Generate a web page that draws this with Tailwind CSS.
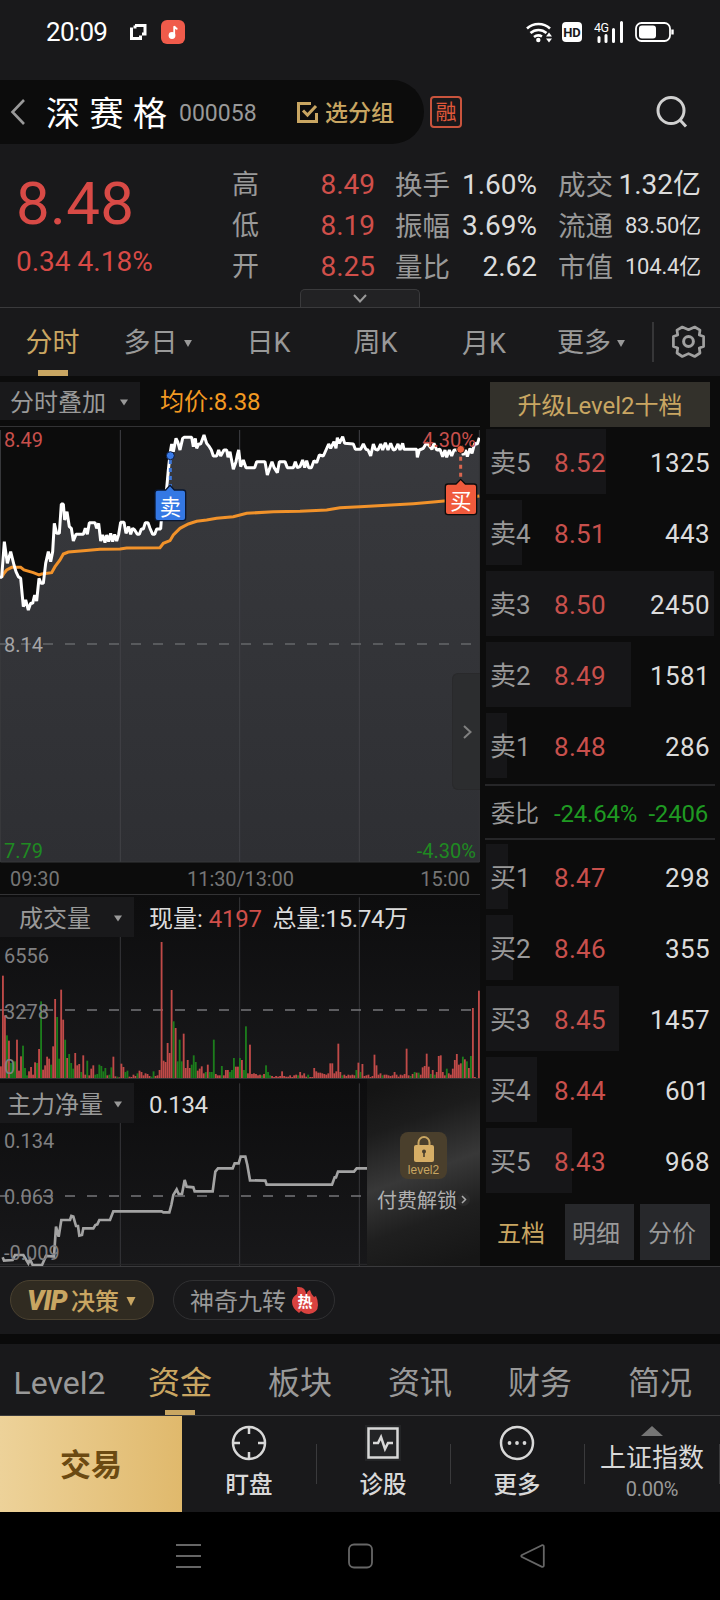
<!DOCTYPE html>
<html lang="zh-CN">
<head>
  <meta charset="UTF-8" />
  <meta name="viewport" content="width=device-width, initial-scale=1.0" />
  <title>深赛格 000058</title>
  <script src="https://cdn.jsdelivr.net/npm/@tailwindcss/browser@4"></script>
</head>
<body class="bg-black">
<div class="w-[720px] h-[1600px] overflow-hidden flex flex-col bg-[#19191b] text-[#999999] leading-none whitespace-nowrap font-['Roboto','Noto_Sans_CJK_SC',sans-serif]">

  <!-- status bar -->
  <div class="h-[80px] shrink-0 flex items-start pt-5 pl-[46px] pr-[46px] text-white">
    <div class="flex items-center h-6 w-full">
      <span class="text-[26px] tracking-[-0.7px] w-[83px]">20:09</span>
      <svg class="w-[18px] h-[18px] mr-[14px]" viewBox="0 0 18 18"><path d="M6 2.500h10v8.500h-3M2.500 4.500v11h9v-3M6 2.500v3" fill="none" stroke="#fff" stroke-width="3"/></svg>
      <svg class="w-6 h-6" viewBox="0 0 24 24"><rect width="24" height="24" rx="6" fill="#f05b4b"/><circle cx="11" cy="15.500" r="3.400" fill="#fff"/><path d="M13.200 15V6.200q1 2.300 3.200 2.800" fill="none" stroke="#fff" stroke-width="1.800"/></svg>
      <div class="grow"></div>
      <svg class="w-[27px] h-[22px] mr-[9px]" viewBox="0 0 27 22"><g fill="none" stroke="#fff" stroke-width="2.600"><path d="M1 7.500a17 17 0 0 1 23 0"/><path d="M4.500 12a12 12 0 0 1 16 0"/><path d="M8 16a7 7 0 0 1 8-.5"/></g><circle cx="12.300" cy="19" r="2.200" fill="#fff"/><path d="M23 11.500l3 4h-6zM23 21.500l3-4h-6z" fill="#fff"/></svg>
      <span class="w-5 h-5 mr-3 rounded-[4px] bg-white text-[#19191b] text-[13px] font-bold flex items-center justify-center">HD</span>
      <svg class="w-[30px] h-[22px] mr-[11px]" viewBox="0 0 30 22"><text x="0" y="10.500" font-size="12.500" textLength="15" fill="#fff">4G</text><path d="M5 16.500v4M12 14.500v6M19.500 8.500v12M27.500 1.500v19" stroke="#fff" stroke-width="3" stroke-linecap="round"/></svg>
      <svg class="w-[39px] h-[22px]" viewBox="0 0 39 22"><rect x="1" y="2" width="34" height="18" rx="5.500" fill="none" stroke="#fff" stroke-width="1.800"/><rect x="4" y="4.500" width="17" height="13" rx="3" fill="#fff"/><path d="M37.500 8.500v5" stroke="#fff" stroke-width="2.400"/></svg>
    </div>
  </div>

  <!-- title -->
  <div class="h-16 shrink-0 flex items-center">
    <div class="w-[424px] h-16 rounded-r-full bg-[#0c0c0c] flex items-center pl-[10px]">
      <svg class="w-4 h-7 mr-5" viewBox="0 0 16 28"><path d="M14 2L2.500 14 14 26" fill="none" stroke="#999" stroke-width="2.600"/></svg>
      <span class="text-[34px] tracking-[9.500px] text-white w-[133px] pt-[3px]">深赛格</span>
      <span class="text-[23px] w-[118px] pt-[2px]">000058</span>
      <svg class="w-[21px] h-[21px] mr-[7px]" viewBox="0 0 21 21"><path d="M14 1.500H1.500v18h18V11M6 8.500l4.500 4.500L19 4" fill="none" stroke="#c9a662" stroke-width="3"/></svg>
      <span class="text-[23px] font-medium text-[#c9a662] pt-[2px]">选分组</span>
    </div>
    <span class="w-8 h-8 ml-[6px] border-2 border-[#c9543d] rounded-[4px] text-[21px] text-[#e0583a] flex items-center justify-center pt-px">融</span>
    <svg class="w-[34px] h-[34px] ml-auto mr-[31px]" viewBox="0 0 34 34"><circle cx="16" cy="15.500" r="13" fill="none" stroke="#d0d0d0" stroke-width="3"/><path d="M25 25l6 6.500" stroke="#d0d0d0" stroke-width="3"/></svg>
  </div>

  <!-- quote -->
  <div class="relative h-[164px] shrink-0 border-b border-[#3a3a3c] flex text-[28px]">
    <div class="w-[232px] pl-4 text-[#d84a46]">
      <div class="text-[60px] mt-[30px] tracking-[0.300px]">8.48</div>
      <div class="mt-[14px]">0.34 4.18%</div>
    </div>
    <div class="grid grid-rows-[41px_41px_41px] items-center w-[143px] mt-[20px] h-[123px]">
      <div class="flex justify-between items-center"><span class="text-[27px] pt-[2px]">高</span><span class="text-[#d04f4a]">8.49</span></div>
      <div class="flex justify-between items-center"><span class="text-[27px] pt-[2px]">低</span><span class="text-[#d04f4a]">8.19</span></div>
      <div class="flex justify-between items-center"><span class="text-[27px] pt-[2px]">开</span><span class="text-[#d04f4a]">8.25</span></div>
    </div>
    <div class="grid grid-rows-[41px_41px_41px] items-center w-[142px] ml-5 mt-[20px] h-[123px]">
      <div class="flex justify-between items-center"><span class="text-[27.500px] pt-[2px]">换手</span><span class="text-[#dcdcdc]">1.60%</span></div>
      <div class="flex justify-between items-center"><span class="text-[27.500px] pt-[2px]">振幅</span><span class="text-[#dcdcdc]">3.69%</span></div>
      <div class="flex justify-between items-center"><span class="text-[27.500px] pt-[2px]">量比</span><span class="text-[#dcdcdc]">2.62</span></div>
    </div>
    <div class="grid grid-rows-[41px_41px_41px] items-center w-[143px] ml-[21px] mt-[20px] h-[123px]">
      <div class="flex justify-between items-center"><span class="text-[27.500px] pt-[2px]">成交</span><span class="text-[#dcdcdc] text-[28px] pt-px">1.32亿</span></div>
      <div class="flex justify-between items-center"><span class="text-[27.500px] pt-[2px]">流通</span><span class="text-[#dcdcdc] text-[22px] tracking-[-0.200px] pt-px">83.50亿</span></div>
      <div class="flex justify-between items-center"><span class="text-[27.500px] pt-[2px]">市值</span><span class="text-[#dcdcdc] text-[22px] tracking-[-0.200px] pt-px">104.4亿</span></div>
    </div>
    <div class="absolute left-[300px] bottom-0 w-[120px] h-[18px] border border-b-0 border-[#3a3a3c] rounded-t-[5px] bg-[#222224] flex items-center justify-center">
      <svg class="w-[14px] h-[9px]" viewBox="0 0 14 9"><path d="M1 1l6 6.500L13 1" fill="none" stroke="#999" stroke-width="2"/></svg>
    </div>
  </div>

  <!-- period tabs -->
  <div class="h-[68px] shrink-0 flex items-center text-[27px]">
    <div class="relative w-[105px] h-full flex items-center justify-center pt-[3px] text-[#c9a662]">分时<i class="absolute bottom-0 left-[38px] w-[30px] h-[6px] bg-[#c9a662]"></i></div>
    <div class="w-[105px] flex items-center justify-center gap-[6px] pt-[3px]">多日<svg class="w-2 h-[7px]" viewBox="0 0 9 8"><path d="M0 0h9L4.500 8z" fill="#999"/></svg></div>
    <div class="w-[117px] text-center pt-[3px]">日K</div>
    <div class="w-[97px] text-center pt-[3px]">周K</div>
    <div class="w-[120px] text-center pt-[5px]">月K</div>
    <div class="w-[94px] flex items-center justify-center gap-[6px] pt-[3px]">更多<svg class="w-2 h-[7px]" viewBox="0 0 9 8"><path d="M0 0h9L4.500 8z" fill="#999"/></svg></div>
    <i class="w-[2px] h-10 ml-[14px] bg-[#363638]"></i>
    <svg class="w-[34px] h-[34px] ml-[17px]" viewBox="0 0 34 34"><g fill="none" stroke="#a0a0a0" stroke-width="2.700" stroke-linejoin="round"><path d="M11.300 2L17.500 4.700 23.700 2 29 5.200 28.300 10 32.600 11.500V21.500L28.300 23 29 28 23.700 31.500 17.500 28.600 11.300 31.500 6 28 6.700 23 2.400 21.500V11.500L6.700 10 6 5.200z"/><circle cx="17.500" cy="16.500" r="4.900" stroke-width="3"/></g></svg>
  </div>

  <!-- charts and order book -->
  <div class="h-[891px] shrink-0 bg-[#0c0c0c] border-b border-[#3a3a3c] flex">
    <div class="w-[480px] flex flex-col">
      <div class="h-[51px] pt-[6px] flex border-b border-[#333335]">
        <div class="w-[140px] h-[38px] bg-[#19191b] text-[24px] flex items-center pt-[3px] pl-[10px] gap-[14px]">分时叠加<svg class="w-2 h-[7px]" viewBox="0 0 9 7"><path d="M0 0h9L4.500 7z" fill="#999"/></svg></div>
        <div class="h-[38px] flex items-center pl-5 pt-[2px] text-[24px] text-[#f39a22]">均价:8.38</div>
      </div>

      <!-- price -->
      <div class="relative h-[436px]">
        <svg class="block w-[480px] h-[436px]" viewBox="0 171 1440 1308">
          <defs><linearGradient id="area" x1="0" y1="0" x2="0" y2="1"><stop offset="0" stop-color="#38393d"/><stop offset="1" stop-color="#2e2f33"/></linearGradient></defs>
          <path id="priceArea" fill="url(#area)"/>
          <path d="M361 180V1476M719 180V1476M1078 180V1476" stroke="#414246" stroke-width="3"/>
          <path d="M1.500 180V1476H1438V180" fill="none" stroke="#37383b" stroke-width="3"/>
          <path d="M-3 822H1416" stroke="#66676a" stroke-width="5" stroke-dasharray="30 36"/>
          <path d="M5 622L12 610 20 600 35 592 62 592 72 600 100 608 117 615 125 612 155 608 165 590 180 570 190 552 205 546 250 542 300 538 360 537 380 534 480 533 490 520 510 512 520 495 540 475 565 462 590 454 620 450 650 445 700 440 740 430 820 425 900 424 980 420 1020 413 1080 410 1160 406 1240 401 1300 396 1340 392 1438 378" fill="none" stroke="#f1922a" stroke-width="9"/>
          <path id="priceLine" fill="none" stroke="#fff" stroke-width="9" stroke-linejoin="bevel"/>
          <path d="M511 270V350" stroke="#3f78d8" stroke-width="9" stroke-dasharray="12 12"/>
          <circle cx="511" cy="257" r="12" fill="#3a7be8" stroke="#0c1c40" stroke-width="3"/>
          <path d="M1382 260V330" stroke="#d9664f" stroke-width="9" stroke-dasharray="12 12"/>
          <circle cx="1382" cy="238" r="12" fill="#f0603f" stroke="#141414" stroke-width="3"/>
          <path d="M473 360H497L510 346 523 360H549Q557 360 557 368V444Q557 452 549 452H473Q465 452 465 444V368Q465 360 473 360Z" fill="#3478e4" stroke="#0a1730" stroke-width="4"/>
          <path d="M1344 342H1368L1382 328 1396 342H1422Q1430 342 1430 350V426Q1430 434 1422 434H1344Q1336 434 1336 426V350Q1336 342 1344 342Z" fill="#f05a3c" stroke="#0c0c0c" stroke-width="4"/>
          <text x="511" y="434" font-size="64" fill="#fff" text-anchor="middle">卖</text>
          <text x="1383" y="416" font-size="64" fill="#fff" text-anchor="middle">买</text>
        </svg>
        <div class="absolute inset-0 flex flex-col justify-between pt-[3px] pb-[2px] px-1 text-[20px]">
          <div class="flex justify-between text-[#c8504c]"><span>8.49</span><span>4.30%</span></div>
          <div class="text-[#a5a5a7] pb-px">8.14</div>
          <div class="flex justify-between text-[#1f8a22]"><span>7.79</span><span>-4.30%</span></div>
        </div>
        <div class="absolute right-0 top-[246px] w-7 h-[117px] rounded-l-[6px] border border-r-0 border-[#29292b] bg-[#2c2d2f] flex items-center justify-center pl-px">
          <svg class="w-[9px] h-[14px]" viewBox="0 0 9 14"><path d="M1 1l6.500 6L1 13" fill="none" stroke="#808080" stroke-width="2"/></svg>
        </div>
      </div>
      <div class="h-8 flex justify-between items-center px-[10px] pt-px text-[20px] text-[#757575] border-b border-[#333335]"><span>09:30</span><span class="tracking-[-0.100px] pl-px">11:30/13:00</span><span>15:00</span></div>

      <!-- volume -->
      <div class="relative h-[184px] bg-linear-to-b from-[#0d0d0e] to-[#18181a] border-b border-[#333335]">
        <svg class="absolute left-0 top-0 w-[480px] h-[183px]" viewBox="0 15 1440 549">
          <path d="M361 141V563M719 22V563M1078 22V563" stroke="#37373a" stroke-width="3"/>
          <path d="M-3 360H1416" stroke="#76767a" stroke-width="5" stroke-dasharray="30 36"/>
          <g id="volume"></g>
        </svg>
        <div class="relative flex items-center h-10 mt-[2px] text-[24px]">
          <div class="w-[134px] h-10 bg-[#19191b] flex items-center pt-[3px] pl-[19px] gap-[23px]">成交量<svg class="w-2 h-[7px]" viewBox="0 0 9 7"><path d="M0 0h9L4.500 7z" fill="#999"/></svg></div>
          <span class="pl-[15px] pt-[3px] text-[#dcdcdc]">现量:</span><span class="pl-[6px] pt-[3px] tracking-[-0.300px] text-[#d04f4a]">4197</span><span class="pl-[11px] pt-[3px] tracking-[-0.300px] text-[#dcdcdc]">总量:15.74万</span>
        </div>
        <div class="relative pl-1 text-[20px] text-[#808082] flex flex-col gap-[35.500px] pt-[9px]"><span>6556</span><span>3278</span><span>0</span></div>
      </div>

      <!-- net inflow -->
      <div class="relative h-[187px] bg-linear-to-b from-[#0d0d0e] to-[#18181a]">
        <svg class="absolute left-0 top-0 w-[480px] h-[187px]" viewBox="0 27 1440 561">
          <path d="M361 159V588M719 40V588M1078 40V588" stroke="#37373a" stroke-width="3"/>
          <path d="M0 583H1101" stroke="#2a2a2c" stroke-width="3"/>
          <path d="M-3 378H1085" stroke="#76767a" stroke-width="5" stroke-dasharray="30 36"/>
          <path d="M8 562L12 572 38 570 45 555 70 555 85 580 90 568 98 585 126 585 138 558 162 560 168 470 176 500 184 450 210 450 214 438 220 440 228 468 234 468 238 497 246 495 250 475 280 475 286 465 292 463 298 450 330 450 340 424 485 424 490 427 508 427 514 405 520 375 530 358 536 372 546 372 554 330 560 350 580 352 584 364 638 364 646 305 654 295 698 295 704 280 716 280 722 260 736 260 742 285 750 331 796 332 800 344 996 344 1004 322 1008 322 1014 305 1062 305 1070 295 1101 295" fill="none" stroke="#a3a3a3" stroke-width="8"/>
        </svg>
        <div class="relative flex items-center h-10 top-1 text-[24px]">
          <div class="w-[134px] h-10 bg-[#19191b] flex items-center pt-[3px] pl-[7px] gap-[11px]">主力净量<svg class="w-2 h-[7px]" viewBox="0 0 9 7"><path d="M0 0h9L4.500 7z" fill="#999"/></svg></div>
          <span class="pl-[15px] pt-[4px] tracking-[-0.300px] text-[#dcdcdc]">0.134</span>
        </div>
        <div class="relative pl-1 text-[20px] text-[#808082] flex flex-col gap-9 pt-3"><span>0.134</span><span>0.063</span><span>-0.009</span></div>
        <div class="absolute left-[367px] top-0 w-[113px] h-[187px] bg-[linear-gradient(160deg,#141414_5%,#1c1c1c_25%,#383838_50%,#1f1f1f_72%,#161616_95%)] flex flex-col items-center pt-[53px]">
          <div class="w-[47px] h-[47px] rounded-[8px] bg-[#4a3f2c] flex flex-col items-center pt-1 text-[#c9a662]">
            <svg class="w-5 h-[26px]" viewBox="0 0 20 26"><path d="M4.500 10V6.500a5.500 5.500 0 0 1 11 0V10" fill="none" stroke="#c9a662" stroke-width="2"/><rect y="9" width="20" height="17" rx="2" fill="#d6ae66"/><circle cx="10" cy="15.500" r="2" fill="#4a3f2c"/><path d="M10 16v5" stroke="#4a3f2c" stroke-width="1.600"/></svg>
            <span class="text-[12px] mt-[2px] font-['Liberation_Sans']">level2</span>
          </div>
          <div class="flex items-center mt-[12px] text-[20px] text-[#b0b0b0]">付费解锁<svg class="w-[13px] h-[13px] -mt-[3px]" viewBox="0 0 13 13"><circle cx="6.500" cy="6.500" r="6.500" fill="#2b2b2b"/><path d="M5 3l3.500 3.500L5 10" fill="none" stroke="#aaa" stroke-width="1.500"/></svg></div>
        </div>
      </div>
    </div>

    <!-- order book -->
    <div class="w-[230px] ml-[5px] flex flex-col">
      <div class="w-[220px] h-[45px] mt-[6px] ml-[5px] mb-[2px] pt-[3px] bg-[#33312b] text-[24px] text-[#c9a662] flex items-center justify-center">升级Level2十档</div>
      <div id="asks"></div>
      <div class="h-[56px] border-y-2 border-[#262628] flex items-center pt-[3px] pl-[6px] pr-[7px] text-[24px]"><span class="w-[63px]">委比</span><span class="tracking-[-0.200px] text-[#1f9a22]">-24.64%</span><span class="ml-auto tracking-[-0.200px] text-[#1f9a22]">-2406</span></div>
      <div id="bids" class="mt-[4px]"></div>
      <div class="flex h-14 mt-[5px] pl-[5px] text-[24px]">
        <span class="w-[75px] flex items-center pt-[3px] pl-[7px] text-[#c9a662]">五档</span>
        <span class="w-[69px] mr-[6px] bg-[#27282b] flex items-center pt-[3px] pl-[7px]">明细</span>
        <span class="w-[70px] bg-[#27282b] flex items-center pt-[3px] pl-2">分价</span>
      </div>
    </div>
  </div>

  <!-- strategy tags -->
  <div class="h-[67px] shrink-0 flex items-center pl-[10px] pb-px gap-[19px] text-[24px]">
    <div class="w-[144px] h-10 rounded-full border border-[#4a4130] bg-[#302b21] text-[#c9a662] flex items-center pl-4"><b class="italic text-[27px] font-black tracking-[-0.800px] mr-[4px] pt-[3px]">VIP</b><span class="font-medium pt-[3px]">决策</span><svg class="w-[10px] h-[9px] ml-[7px] mt-[3px]" viewBox="0 0 10 10"><path d="M0 0h10L5 10z" fill="#c9a662"/></svg></div>
    <div class="w-[162px] h-10 rounded-full border border-[#303032] flex items-center pl-4"><span class="pt-[3px]">神奇九转</span><svg class="w-[28px] h-[29px] ml-[5px]" viewBox="0 0 28 29"><path d="M6 1q9-1 9 8 1-4 4-5 1 4 4 7l2-1q2 4 2 9 0 8-9 9-5 0-8-3l-2 2Q1 22 1 16 1 11 6 8q1-4 0-7z" fill="#d9423f"/><text x="14" y="20.500" font-size="15" font-weight="bold" fill="#fff" text-anchor="middle">热</text></svg></div>
  </div>
  <div class="h-[10px] shrink-0 bg-[#0a0a0a]"></div>

  <!-- section tabs -->
  <div class="h-[72px] shrink-0 grid grid-cols-6 items-center text-center text-[32px] border-b border-[#3a3a3c]">
    <span class="pt-[7px] -ml-px">Level2</span>
    <span class="relative h-full flex items-center justify-center pt-[7px] text-[#c9a662]">资金<i class="absolute bottom-0 left-[45px] w-[30px] h-[5px] bg-[#c9a662]"></i></span>
    <span class="pt-[7px]">板块</span><span class="pt-[7px]">资讯</span><span class="pt-[7px]">财务</span><span class="pt-[7px]">简况</span>
  </div>

  <!-- action bar -->
  <div class="h-24 shrink-0 flex items-center text-[#d8d8d8]">
    <div class="w-[182px] h-full bg-linear-to-r from-[#edd299] to-[#e0b96c] text-[#6b4a12] text-[31px] font-bold flex items-center justify-center pt-[3px]">交易</div>
    <div class="w-[134px] h-full flex flex-col items-center pt-[9px] gap-[13px] text-[23.500px] font-medium">
      <svg class="w-9 h-9" viewBox="0 0 36 36"><g fill="none" stroke="#d8d8d8" stroke-width="2.500"><circle cx="18" cy="18" r="16"/><path d="M18 2v7M18 34v-7M2 18h7M34 18h-7"/></g></svg>盯盘
    </div>
    <i class="w-px h-10 bg-[#3a3a3c]"></i>
    <div class="w-[132px] h-full flex flex-col items-center pt-[9px] gap-[13px] text-[23.500px] font-medium">
      <svg class="w-9 h-9" viewBox="0 0 36 36"><rect width="36" height="36" fill="#232426"/><g fill="none" stroke="#d8d8d8" stroke-width="2.500"><path d="M3.500 3.500h29v29h-29z"/><path d="M8 18h5l3-6 4 12 3-6h5"/></g></svg>诊股
    </div>
    <i class="w-px h-10 ml-px bg-[#3a3a3c]"></i>
    <div class="w-[132px] h-full flex flex-col items-center pt-[9px] gap-[13px] text-[23.500px] font-medium">
      <svg class="w-9 h-9" viewBox="0 0 36 36"><circle cx="18" cy="18" r="16" fill="none" stroke="#d8d8d8" stroke-width="2.500"/><g fill="#d8d8d8"><circle cx="10.500" cy="18" r="1.900"/><circle cx="18" cy="18" r="1.900"/><circle cx="25.500" cy="18" r="1.900"/></g></svg>更多
    </div>
    <i class="w-px h-10 ml-px bg-[#3a3a3c]"></i>
    <div class="w-[134px] h-full flex flex-col items-center pt-[10px]">
      <svg class="w-[22px] h-[10px]" viewBox="0 0 22 10"><path d="M11 0l11 10H0z" fill="#757575"/></svg>
      <span class="text-[26px] mt-[9px]">上证指数</span>
      <span class="text-[20px] mt-[8px] tracking-[-0.200px] text-[#999999]">0.00%</span>
    </div>
    <i class="w-px h-10 bg-[#3a3a3c]"></i>
  </div>

  <!-- system navigation -->
  <div class="h-[88px] shrink-0 bg-black flex items-center justify-center gap-[147px]">
    <svg class="w-[25px] h-[26px]" viewBox="0 0 25 26"><path d="M0 2h25M0 13h25M0 24h25" stroke="#666" stroke-width="2"/></svg>
    <svg class="w-[25px] h-[26px]" viewBox="0 0 25 26"><rect x="1" y="1.500" width="23" height="23" rx="5" fill="none" stroke="#666" stroke-width="1.800"/></svg>
    <svg class="w-[25px] h-[26px]" viewBox="0 0 25 26"><path d="M22 2.200L2 12q-1.500 1 0 2l20 9.800q1.800.5 1.800-1.500V3.700q0-2-1.800-1.500z" fill="none" stroke="#666" stroke-width="1.800"/></svg>
  </div>
</div>

<script>
  // five price levels on each side: label, price, lots, bar width
  const asks = [["卖5", "8.52", 1325, 120], ["卖4", "8.51", 443, 36], ["卖3", "8.50", 2450, 228], ["卖2", "8.49", 1581, 145], ["卖1", "8.48", 286, 21]];
  const bids = [["买1", "8.47", 298, 22], ["买2", "8.46", 355, 27], ["买3", "8.45", 1457, 133], ["买4", "8.44", 601, 51], ["买5", "8.43", 968, 86]];

  function renderRows(id, rows) {
    document.getElementById(id).innerHTML = rows.map(([label, price, lots, w]) => `
      <div class="relative h-[65px] mb-[6px] flex items-center pt-[3px] pl-[5px] pr-[5px] text-[26px]">
        <i class="absolute left-px top-0 h-full bg-[#161618]" style="width:${w}px"></i>
        <span class="relative w-[64px]">${label}</span>
        <span class="relative text-[#c8504c] tracking-[0.300px]">${price}</span>
        <span class="relative ml-auto text-[#dcdcdc] tracking-[0.400px]">${lots}</span>
      </div>`).join("");
  }
  renderRows("asks", asks);
  renderRows("bids", bids);

  const price = "0 622 5 622 13 515 22 580 32 545 42 585 48 605 55 620 62 625 70 710 77 690 85 720 92 700 98 700 104 675 110 693 117 625 123 640 130 640 137 580 145 545 152 575 158 545 163 460 170 490 178 490 184 402 190 402 194 450 201 425 208 470 214 475 220 513 228 493 250 493 256 475 262 493 268 458 285 458 290 475 296 460 302 513 308 495 315 518 320 495 326 515 332 490 338 515 344 493 350 513 356 493 362 457 372 457 378 490 386 470 392 493 398 475 404 480 412 493 418 493 424 477 430 477 436 458 444 458 450 475 458 493 464 493 470 477 482 477 484 450 500 355 505 300 511 245 515 222 520 245 528 205 533 215 540 240 548 205 552 202 575 202 580 230 586 205 590 235 596 222 602 222 612 195 620 220 628 230 634 240 640 258 650 258 656 240 662 258 672 240 680 240 684 262 690 245 700 298 708 275 712 255 716 240 722 290 730 270 738 293 764 293 770 275 795 275 802 315 810 292 816 275 822 292 832 308 838 275 855 275 862 293 880 293 886 275 892 293 900 290 908 270 914 293 920 272 926 293 934 293 942 272 950 278 958 255 970 258 978 240 986 222 992 235 1002 215 1008 235 1012 203 1018 220 1028 200 1034 220 1060 222 1066 238 1082 238 1090 222 1098 238 1104 240 1112 258 1120 222 1126 238 1134 240 1142 222 1148 240 1156 218 1164 240 1172 220 1180 240 1186 238 1194 222 1200 240 1208 220 1212 238 1250 238 1252 262 1258 240 1270 235 1280 218 1296 238 1302 220 1310 240 1320 238 1328 260 1335 240 1340 262 1348 240 1355 258 1362 240 1384 240 1390 255 1396 240 1402 260 1410 235 1416 250 1424 220 1432 222 1438 203";
  document.getElementById("priceLine").setAttribute("d", "M" + price);
  document.getElementById("priceArea").setAttribute("d", "M" + price + "V1476H0Z");

  // one bar per minute, negative means the price fell
  const volume = [35,307,188,-128,112,-45,-50,-50,115,22,65,-97,-30,-8,20,33,10,47,-45,87,-230,25,38,64,58,-40,95,237,-183,-58,265,175,-115,60,-72,-45,-28,75,38,42,-18,68,10,-52,8,28,38,-10,-12,-40,-36,-20,-30,8,-10,-32,64,5,-4,2,43,33,-18,-22,4,3,10,6,-14,22,18,8,14,12,6,-4,-20,6,8,24,408,52,48,105,75,264,-170,150,-50,-115,-50,133,30,54,30,-40,-68,-48,22,28,35,14,-18,40,-18,-18,-115,12,8,8,-36,8,24,24,-18,-24,-60,34,34,-60,54,-24,-155,14,100,12,14,12,8,10,-8,12,-38,-18,-8,6,3,6,4,6,20,6,4,4,8,3,8,10,-8,18,8,14,4,-10,3,3,30,20,16,16,14,12,10,14,44,44,14,20,103,18,-8,10,6,10,8,10,8,-24,46,-18,42,6,8,10,3,6,70,38,10,14,-8,10,10,8,6,8,18,10,4,10,8,12,88,8,-6,12,-18,16,-16,10,32,36,73,34,-12,24,-10,18,66,68,18,8,-28,14,10,28,54,72,40,44,-64,56,-50,30,-66,210,3,0,262];
  document.getElementById("volume").innerHTML = volume.map((v, i) =>
    `<rect x="${i * 1434 / (volume.length - 1)}" y="${564 - Math.abs(v)}" width="5.500" height="${Math.abs(v)}" fill="${v < 0 ? "#1c7d1c" : "#c04a48"}"/>`).join("");
</script>
</body>
</html>
